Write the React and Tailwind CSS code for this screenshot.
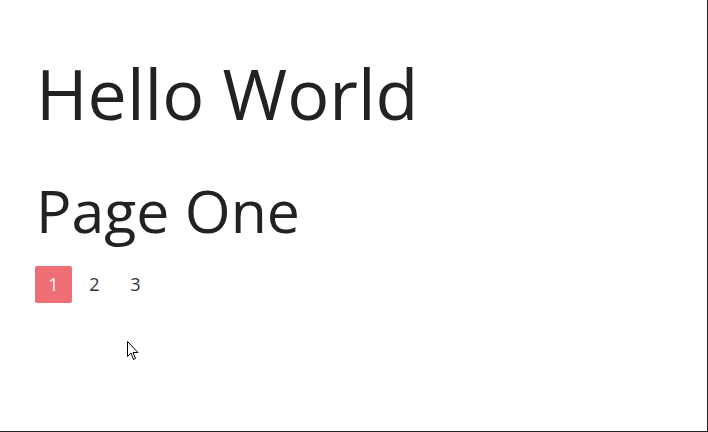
export default function App() {
  return (
    <div className="relative h-[432px] w-[708px] border-r border-b border-[#222] bg-white px-[36px] pt-[58px] text-[#222] font-['Open_Sans',sans-serif]">
      <h1 className="text-[70px] leading-none font-normal">Hello World</h1>
      <h2 className="mt-[53px] text-[59px] leading-none font-normal">Page One</h2>
      <div className="-ml-px mt-[26px] flex items-center gap-[4px] text-[18px]">
        <span className="flex h-[37px] w-[37px] items-center justify-center rounded-[2px] bg-[#ef6f75] font-medium text-white">1</span>
        <span className="flex h-[37px] w-[37px] items-center justify-center text-[#333]">2</span>
        <span className="flex h-[37px] w-[37px] items-center justify-center text-[#333]">3</span>
      </div>
      <svg className="absolute left-[127px] top-[341px]" width="12" height="20" viewBox="0 0 12 20">
        <path d="M0.5 0.5 L0.5 15.5 L4 12 L6.5 18.5 L8.5 17.5 L6 11.5 L11 11.5 Z" fill="white" stroke="black" strokeWidth="1" />
      </svg>
    </div>
  );
}
